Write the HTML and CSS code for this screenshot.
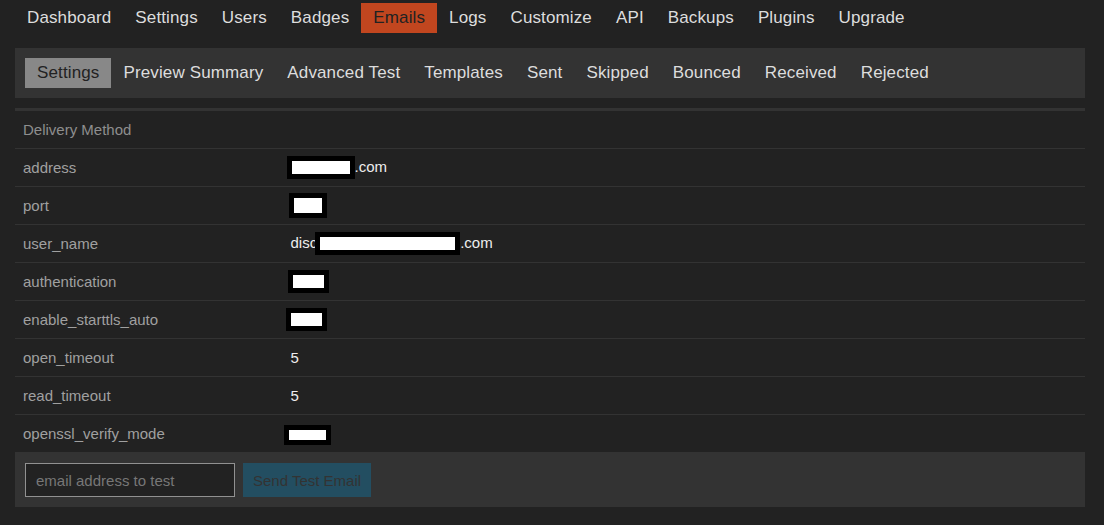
FILE: index.html
```html
<!DOCTYPE html>
<html lang="en">
<head>
    <meta charset="UTF-8">
    <meta name="viewport" content="width=device-width, initial-scale=1.0">
    <title>Emails - Settings</title>
    <link rel="stylesheet" href="styles.css">
</head>
<body>

    <div class="admin">
        <ul class="main-nav">
            <li><a href="#">Dashboard</a></li>
            <li><a href="#">Settings</a></li>
            <li><a href="#">Users</a></li>
            <li><a href="#">Badges</a></li>
            <li><a href="#" class="active">Emails</a></li>
            <li><a href="#">Logs</a></li>
            <li><a href="#">Customize</a></li>
            <li><a href="#">API</a></li>
            <li><a href="#">Backups</a></li>
            <li><a href="#">Plugins</a></li>
            <li><a href="#">Upgrade</a></li>
        </ul>

        <div class="sub-nav">
            <a href="#" class="active">Settings</a>
            <a href="#">Preview Summary</a>
            <a href="#">Advanced Test</a>
            <a href="#">Templates</a>
            <a href="#">Sent</a>
            <a href="#">Skipped</a>
            <a href="#">Bounced</a>
            <a href="#">Received</a>
            <a href="#">Rejected</a>
        </div>

        <table class="settings-table">
            <thead>
                <tr><th colspan="2">Delivery Method</th></tr>
            </thead>
            <tbody>
                <tr>
                    <td>address</td>
                    <td class="value"><span class="redact r-address"></span>.com</td>
                </tr>
                <tr>
                    <td>port</td>
                    <td class="value"><span class="redact r-port"></span></td>
                </tr>
                <tr>
                    <td>user_name</td>
                    <td class="value">disc<span class="redact r-user"></span>.com</td>
                </tr>
                <tr>
                    <td>authentication</td>
                    <td class="value"><span class="redact r-auth"></span></td>
                </tr>
                <tr>
                    <td>enable_starttls_auto</td>
                    <td class="value"><span class="redact r-tls"></span></td>
                </tr>
                <tr>
                    <td>open_timeout</td>
                    <td class="value">5</td>
                </tr>
                <tr>
                    <td>read_timeout</td>
                    <td class="value">5</td>
                </tr>
                <tr>
                    <td>openssl_verify_mode</td>
                    <td class="value"><span class="redact r-ssl"></span></td>
                </tr>
            </tbody>
        </table>

        <form class="test-email">
            <input type="text" placeholder="email address to test">
            <button type="button" disabled>Send Test Email</button>
        </form>
    </div>

</body>
</html>
```

FILE: styles.css
```css
body {
    font-family: "Liberation Sans", Arial, sans-serif;
    background-color: #222;
    color: #ddd;
    margin: 0;
    padding: 0;
}

.admin {
    padding: 3px 19px 0 15px;
}

.main-nav {
    list-style: none;
    margin: 0;
    padding: 0;
    display: flex;
}

.main-nav a {
    display: block;
    padding: 0 12px;
    height: 30px;
    line-height: 29px;
    font-size: 17px;
    letter-spacing: 0.13px;
    color: #ddd;
    text-decoration: none;
}

.main-nav a.active {
    background-color: #c1461f;
    color: #222;
}

.sub-nav {
    display: flex;
    margin-top: 15px;
    padding: 10px;
    background-color: #333;
}

.sub-nav a {
    display: block;
    padding: 0 12px;
    height: 30px;
    line-height: 29px;
    font-size: 17px;
    letter-spacing: 0.13px;
    color: #ddd;
    text-decoration: none;
}

.sub-nav a.active {
    background-color: #888;
    color: #222;
}

.settings-table {
    width: 100%;
    margin-top: 10px;
    border-collapse: collapse;
    font-size: 15px;
}

.settings-table th {
    text-align: left;
    font-weight: normal;
    color: #8e8e8e;
    border-top: 3px solid #333;
    border-bottom: 1px solid #333;
    padding: 0 8px;
    height: 37px;
}

.settings-table td {
    color: #a0a0a0;
    border-bottom: 1px solid #333;
    padding: 0 8px;
    height: 37px;
}

.settings-table td:first-child {
    width: 25%;
}

.settings-table tr:last-child td {
    border-bottom: none;
}

.settings-table td.value {
    color: #eee;
    padding-left: 8px;
    line-height: 20px;
}

.redact {
    display: inline-block;
    vertical-align: -7px;
    height: 13px;
    background-color: #fff;
    border: 5px solid #000;
}

.r-address { width: 58px; margin-left: -4px; }
.r-port { width: 28px; margin-left: -2px; height: 15px; }
.r-user { width: 135px; margin-left: -2px; }
.r-auth { width: 31px; margin-left: -3px; }
.r-tls { width: 31px; margin-left: -5px; }
.r-ssl { width: 37px; margin-left: -7px; height: 10px; }

.test-email {
    display: flex;
    gap: 8px;
    padding: 11px 10px 10px;
    margin: 0;
    background-color: #333;
}

.test-email input {
    width: 210px;
    height: 34px;
    box-sizing: border-box;
    padding: 0 10px;
    border: 1px solid #919191;
    background-color: #222;
    color: #ddd;
    font-family: "Liberation Sans", Arial, sans-serif;
    font-size: 15px;
}

.test-email input::placeholder {
    color: #777;
}

.test-email button {
    height: 34px;
    padding: 0 10px;
    border: none;
    background-color: #234e61;
    color: #333;
    font-family: "Liberation Sans", Arial, sans-serif;
    font-size: 15px;
}
```
